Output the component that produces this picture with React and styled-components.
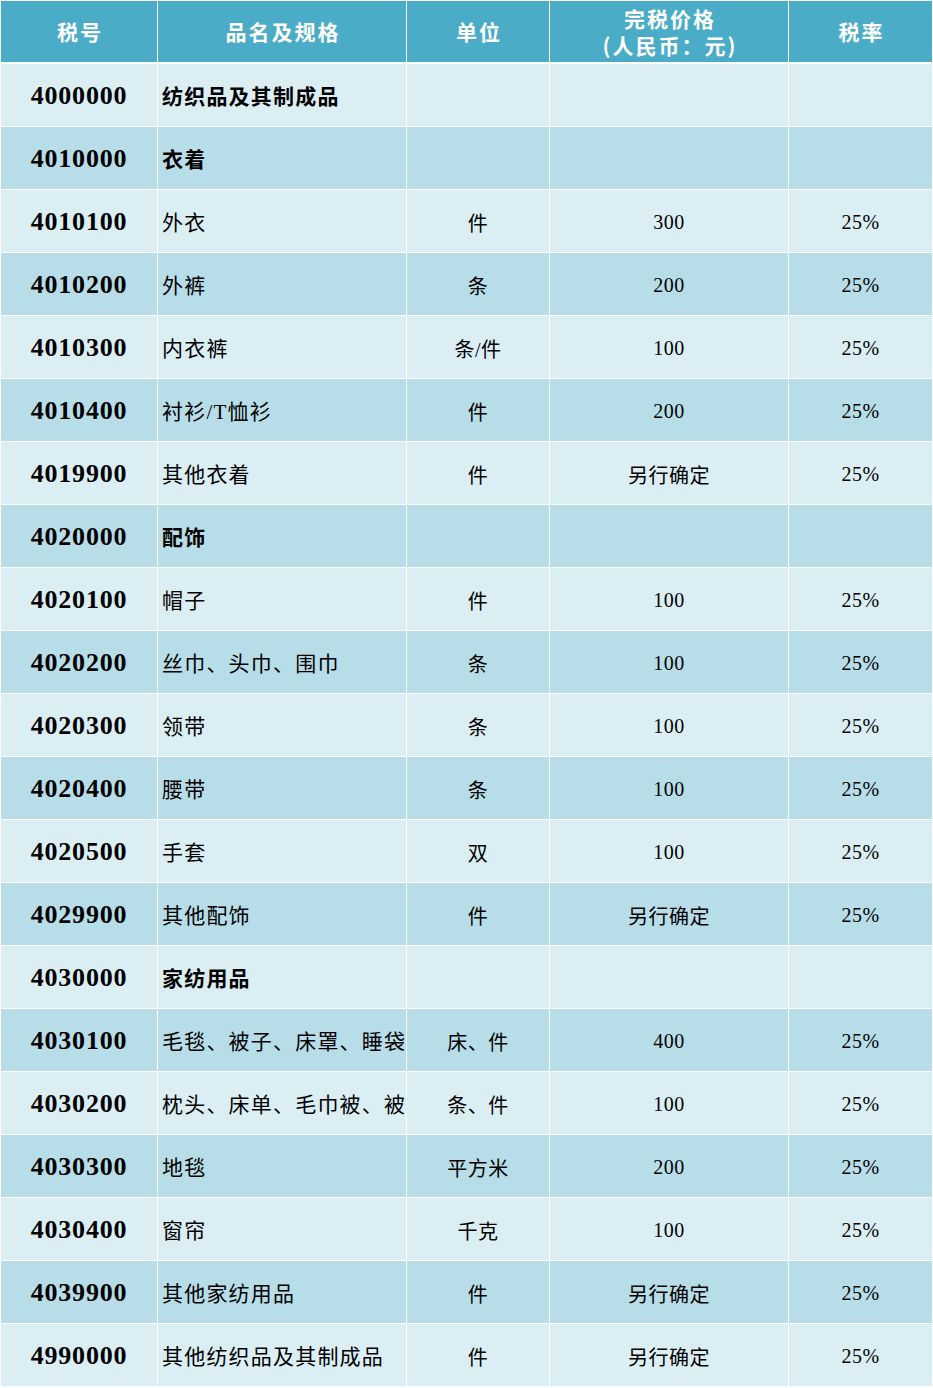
import React from 'react';
import { styled, createGlobalStyle } from 'styled-components';

const GlobalStyle = createGlobalStyle`
  html, body {
    margin: 0;
    padding: 0;
    background: #ffffff;
  }
`;

const columns = '156px 248px 142px 238px 143px';

const rows = [
  { code: '4000000', name: '纺织品及其制成品', group: true },
  { code: '4010000', name: '衣着', group: true },
  { code: '4010100', name: '外衣', unit: '件', price: '300', rate: '25%' },
  { code: '4010200', name: '外裤', unit: '条', price: '200', rate: '25%' },
  { code: '4010300', name: '内衣裤', unit: '条/件', price: '100', rate: '25%' },
  { code: '4010400', name: '衬衫/T恤衫', unit: '件', price: '200', rate: '25%' },
  { code: '4019900', name: '其他衣着', unit: '件', price: '另行确定', rate: '25%' },
  { code: '4020000', name: '配饰', group: true },
  { code: '4020100', name: '帽子', unit: '件', price: '100', rate: '25%' },
  { code: '4020200', name: '丝巾、头巾、围巾', unit: '条', price: '100', rate: '25%' },
  { code: '4020300', name: '领带', unit: '条', price: '100', rate: '25%' },
  { code: '4020400', name: '腰带', unit: '条', price: '100', rate: '25%' },
  { code: '4020500', name: '手套', unit: '双', price: '100', rate: '25%' },
  { code: '4029900', name: '其他配饰', unit: '件', price: '另行确定', rate: '25%' },
  { code: '4030000', name: '家纺用品', group: true },
  { code: '4030100', name: '毛毯、被子、床罩、睡袋', unit: '床、件', price: '400', rate: '25%' },
  { code: '4030200', name: '枕头、床单、毛巾被、被套', unit: '条、件', price: '100', rate: '25%' },
  { code: '4030300', name: '地毯', unit: '平方米', price: '200', rate: '25%' },
  { code: '4030400', name: '窗帘', unit: '千克', price: '100', rate: '25%' },
  { code: '4039900', name: '其他家纺用品', unit: '件', price: '另行确定', rate: '25%' },
  { code: '4990000', name: '其他纺织品及其制成品', unit: '件', price: '另行确定', rate: '25%' },
];

const App = () => {
  return (
    <>
      <GlobalStyle />
      <Sheet>
        <HeaderRow>
          <HeaderCell>税号</HeaderCell>
          <HeaderCell>品名及规格</HeaderCell>
          <HeaderCell>单位</HeaderCell>
          <HeaderCell>
            <span>完税价格</span>
            <span>(人民币：元)</span>
          </HeaderCell>
          <HeaderCell>税率</HeaderCell>
        </HeaderRow>
        {rows.map((row, i) => (
          <BodyRow key={row.code} $shade={i % 2 === 1}>
            <CodeCell>{row.code}</CodeCell>
            <NameCell $bold={row.group}>{row.name}</NameCell>
            <ValueCell>{row.unit}</ValueCell>
            <ValueCell>{row.price}</ValueCell>
            <ValueCell>{row.rate}</ValueCell>
          </BodyRow>
        ))}
      </Sheet>
    </>
  );
};

export default App;

const Sheet = styled.div`
  width: 933px;
  box-sizing: border-box;
  padding: 1px;
  display: flex;
  flex-direction: column;
  gap: 1px;
  background: #ffffff;
`;

const HeaderRow = styled.div`
  display: grid;
  grid-template-columns: ${columns};
  column-gap: 1px;
  height: 61px;
  margin-bottom: 1px;
`;

const HeaderCell = styled.div`
  background: #4aacc6;
  color: #ffffff;
  font-family: "Noto Sans CJK SC", "Noto Sans", sans-serif;
  font-weight: 700;
  font-size: 21px;
  letter-spacing: 2px;
  line-height: 27px;
  display: flex;
  flex-direction: column;
  align-items: center;
  justify-content: center;
  text-align: center;
  padding-left: 2px;
`;

const BodyRow = styled.div`
  display: grid;
  grid-template-columns: ${columns};
  column-gap: 1px;
  height: 62px;
  & > div {
    background: ${props => (props.$shade ? '#b7dde8' : '#daeef3')};
  }
`;

const CodeCell = styled.div`
  display: flex;
  align-items: center;
  justify-content: center;
  font-family: "Liberation Serif", "DejaVu Serif", serif;
  font-weight: 700;
  font-size: 26px;
  letter-spacing: 0.8px;
  color: #000000;
  padding-top: 2px;
`;

const NameCell = styled.div`
  display: flex;
  align-items: center;
  padding-left: 4px;
  overflow: hidden;
  white-space: nowrap;
  font-family: "Liberation Serif", "Noto Sans CJK SC", serif;
  font-weight: ${props => (props.$bold ? 700 : 400)};
  font-size: 21px;
  letter-spacing: 1.2px;
  color: #000000;
`;

const ValueCell = styled.div`
  display: flex;
  align-items: center;
  justify-content: center;
  overflow: hidden;
  white-space: nowrap;
  font-family: "Liberation Serif", "Noto Sans CJK SC", serif;
  font-size: 20px;
  letter-spacing: 0.5px;
  color: #000000;
  padding-top: 2px;
`;
